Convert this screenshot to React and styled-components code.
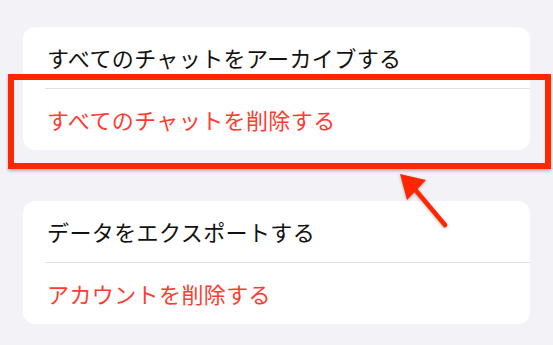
import React from "react";
import styled, { createGlobalStyle } from "styled-components";

const GlobalStyle = createGlobalStyle`
  html, body {
    margin: 0;
    padding: 0;
    background: #f2f2f7;
  }
  body {
    font-family: "Noto Sans CJK JP", "Noto Sans", sans-serif;
    -webkit-font-smoothing: antialiased;
  }
`;

const Page = styled.div`
  position: relative;
  width: 553px;
  height: 345px;
  overflow: hidden;
  background: #f2f2f7;
  padding: 27px 23px 0 23px;
  box-sizing: border-box;
  display: flex;
  flex-direction: column;
  gap: 51px;
`;

const Card = styled.div`
  background: #ffffff;
  border-radius: 12px;
  overflow: hidden;
`;

const Row = styled.div`
  height: ${(p) => (p.first ? "61px" : "62px")};
  display: flex;
  align-items: center;
  font-size: 22px;
  letter-spacing: 0.4px;
  padding-bottom: 2px;
  box-sizing: border-box;
  color: ${(p) => (p.danger ? "#ff3b30" : "#111111")};
  border-top: ${(p) => (p.first ? "none" : "1px solid #e2e2e6")};
  margin-left: ${(p) => (p.first ? "0" : "22px")};
  padding-left: ${(p) => (p.first ? "24px" : "2px")};
`;

const Highlight = styled.div`
  position: absolute;
  left: 8px;
  top: 74px;
  width: 543px;
  height: 95px;
  box-sizing: border-box;
  border: 6px solid #ff2600;
  box-shadow: 0 2px 3px rgba(0, 0, 0, 0.25);
  pointer-events: none;
`;

const Arrow = styled.svg`
  position: absolute;
  left: 385px;
  top: 165px;
  overflow: visible;
  filter: drop-shadow(0 1px 1.5px rgba(0, 0, 0, 0.3));
`;

const App = () => {
  return (
    <>
      <GlobalStyle />
      <Page>
        <Card>
          <Row first>すべてのチャットをアーカイブする</Row>
          <Row danger>すべてのチャットを削除する</Row>
        </Card>
        <Card>
          <Row first>データをエクスポートする</Row>
          <Row danger>アカウントを削除する</Row>
        </Card>
        <Highlight />
        <Arrow width="70" height="70" viewBox="0 0 70 70">
          <line x1="60" y1="60" x2="28" y2="22" stroke="#ff2600" strokeWidth="4.5" strokeLinecap="round" />
          <polygon points="15,9 41,15 22,35" fill="#ff2600" />
        </Arrow>
      </Page>
    </>
  );
};

export default App;
